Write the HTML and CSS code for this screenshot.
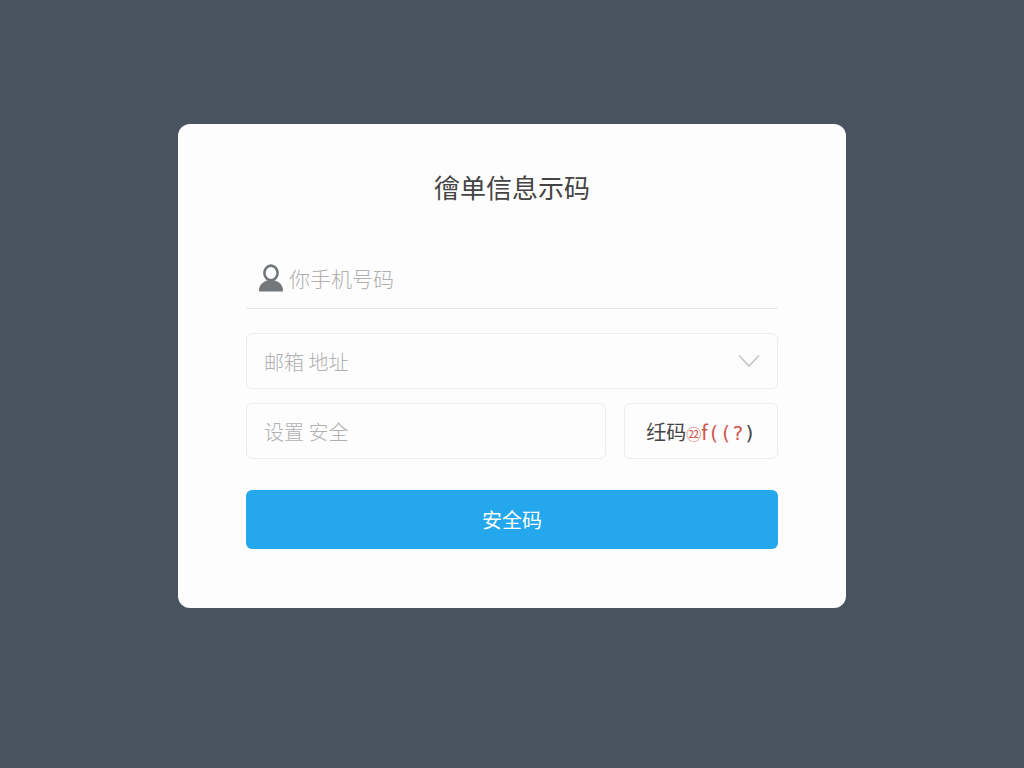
FILE: index.html
```html
<!DOCTYPE html>
<html lang="zh-CN">
<head>
    <meta charset="UTF-8">
    <meta name="viewport" content="width=device-width, initial-scale=1.0">
    <title>徻单信息示码</title>
    <link rel="stylesheet" href="styles.css">
</head>
<body>
    <form class="card">
        <h1 class="title">徻单信息示码</h1>

        <div class="phone">
            <label for="phone" class="phone-icon" aria-label="你手机号码">
                <svg width="26" height="28" viewBox="0 0 26 28">
                    <path d="M1 26.500C1 21 5 17.500 9.500 16.500H16.500C21 17.500 25 21 25 26.500Q25 27.500 24 27.500H2Q1 27.500 1 26.500Z" fill="#74777a"/>
                    <ellipse cx="13" cy="9" rx="6.600" ry="7.400" fill="#fdfdfd" stroke="#74777a" stroke-width="2.600"/>
                </svg>
            </label>
            <input type="tel" id="phone" class="phone-input" placeholder="你手机号码">
        </div>

        <div class="select-wrap">
            <select class="field" aria-label="邮箱 地址">
                <option>邮箱 地址</option>
            </select>
            <svg class="chevron" width="22" height="14" viewBox="0 0 22 14">
                <path d="M1 1.500L11 12L21 1.500" fill="none" stroke="#c4c4c4" stroke-width="1.600"/>
            </svg>
        </div>

        <div class="row">
            <input type="text" class="field" placeholder="设置 安全" aria-label="设置 安全">
            <button type="button" class="captcha">纴码<span class="noise"><small>㉒</small>f<span class="mono">((?</span></span><span class="mono">)</span></button>
        </div>

        <button type="submit" class="submit">安全码</button>
    </form>
</body>
</html>
```
FILE: styles.css
```css
* { box-sizing: border-box; }
body {
    margin: 0;
    min-height: 100vh;
    padding: 0 20px 36px;
    display: flex;
    align-items: center;
    justify-content: center;
    background: #48535f;
    font-family: "Noto Sans CJK SC", sans-serif;
}
input, select, button { font-family: inherit; font-size: 20px; outline: none; }
.card {
    width: 100%;
    max-width: 668px;
    padding: 43px 68px 59px;
    background: #fdfdfd;
    border-radius: 12px;
}
.title {
    margin: 0 0 43px;
    font-size: 26px;
    font-weight: 400;
    line-height: 40px;
    text-align: center;
    color: #444;
}

/* phone */
.phone {
    display: flex;
    align-items: center;
    gap: 5px;
    height: 59px;
    padding: 0 0 2px 12px;
    margin-bottom: 24px;
    border-bottom: 1px solid #e6e6e6;
}
.phone-icon { display: flex; }
.phone-input {
    flex: 1;
    min-width: 0;
    padding: 0;
    border: none;
    background: none;
    font-size: 21px;
    font-weight: 300;
}
input::placeholder { color: #b0b0b0; opacity: 1; }

/* boxed fields */
.field {
    display: block;
    width: 100%;
    height: 56px;
    padding: 0 17px;
    border: 1px solid #ececec;
    border-radius: 6px;
    background: #fdfdfd;
    font-weight: 300;
}
select.field { appearance: none; color: #b0b0b0; }
.select-wrap { position: relative; margin-bottom: 14px; }
.chevron { position: absolute; right: 18px; top: 21px; pointer-events: none; }
.row { display: flex; gap: 18px; margin-bottom: 31px; }
.row .field { flex: 1; min-width: 0; }
.captcha {
    flex: 0 0 154px;
    height: 56px;
    padding: 0;
    border: 1px solid #ececec;
    border-radius: 6px;
    background: #fdfdfd;
    color: #444;
    white-space: nowrap;
}
.noise { color: #d0574f; }
.noise small { font-size: 15px; }
.mono { font-family: "DejaVu Sans Mono", monospace; }

.submit {
    display: block;
    width: 100%;
    height: 59px;
    border: none;
    border-radius: 6px;
    background: #24a7ec;
    color: #fff;
    cursor: pointer;
}
```
